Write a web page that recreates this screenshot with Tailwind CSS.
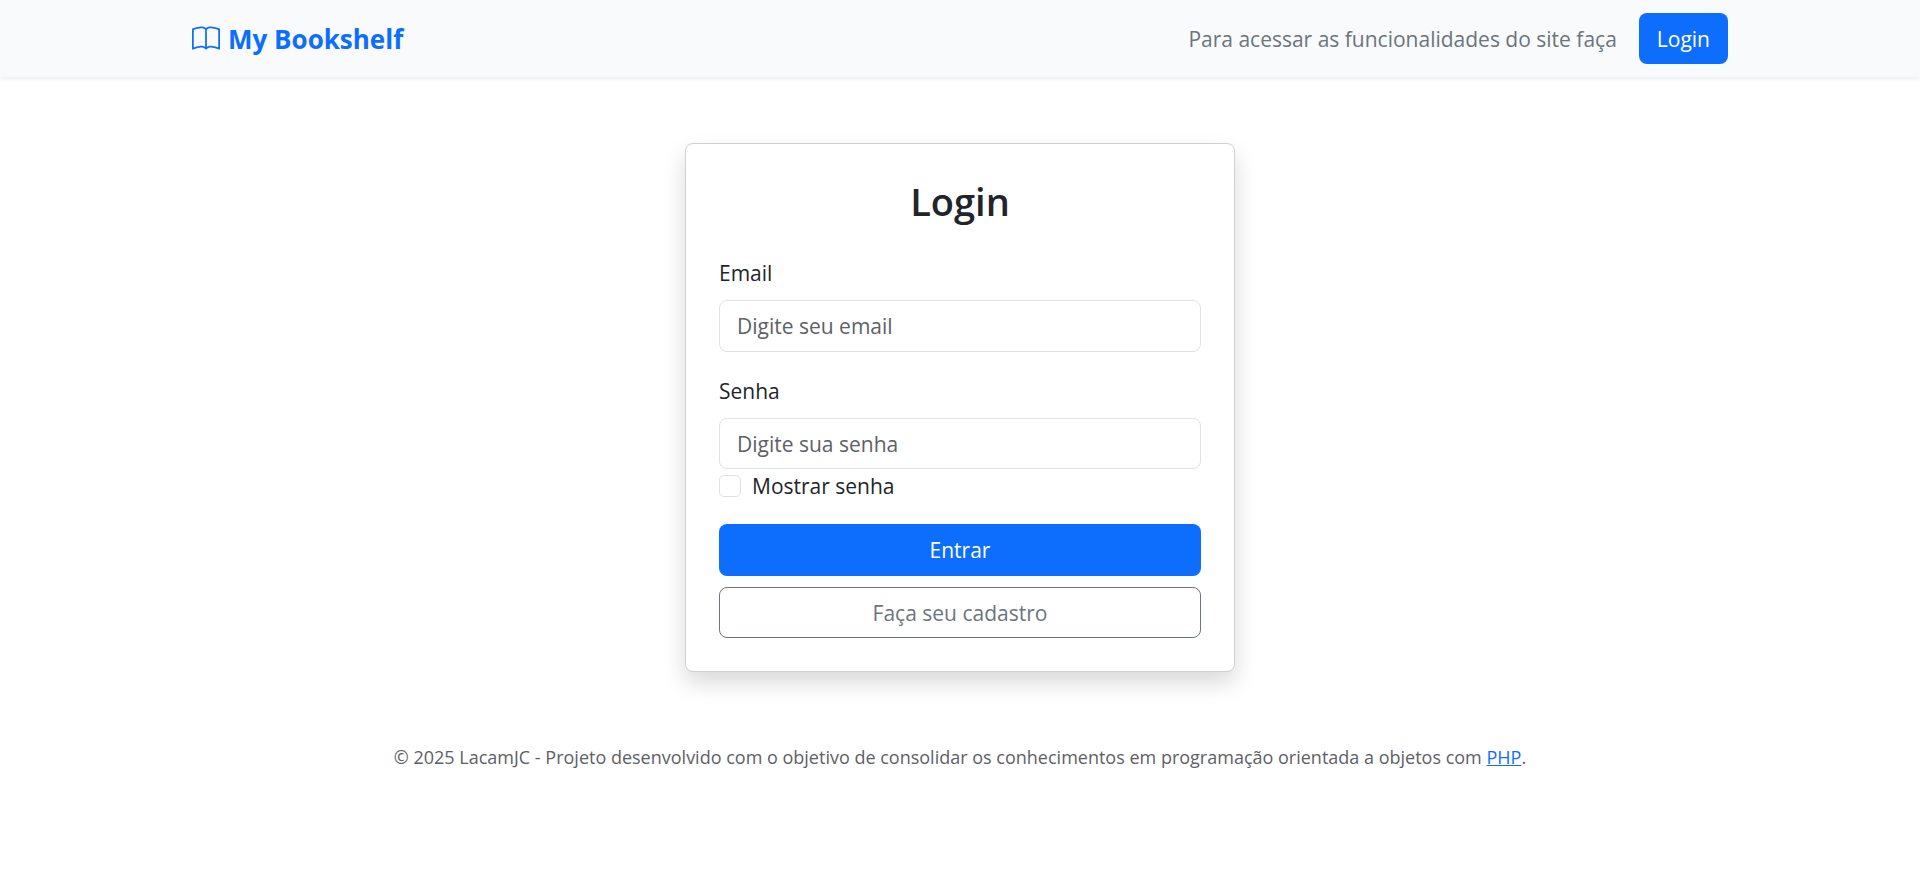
<!DOCTYPE html>
<html lang="pt-BR">
<head>
<meta charset="utf-8">
<meta name="viewport" content="width=device-width, initial-scale=1">
<title>My Bookshelf</title>
<script src="https://cdn.jsdelivr.net/npm/@tailwindcss/browser@4"></script>
</head>
<body class="bg-white font-['Open_Sans',sans-serif] text-[21px] leading-8 text-[#212529]">
<header class="bg-[#f8fafc] py-[13px] shadow-[0_2px_4px_rgba(0,0,0,0.075)]">
  <nav class="mx-auto flex w-4/5 items-center justify-between">
    <a href="#" class="flex items-center gap-2 text-[26px] font-bold text-[#0d6efd]">
      <svg class="size-7" viewBox="0 0 16 16" fill="currentColor" aria-hidden="true"><path d="M1 2.828c.885-.37 2.154-.769 3.388-.893 1.33-.134 2.458.063 3.112.752v9.746c-.935-.53-2.12-.603-3.213-.493-1.18.12-2.37.461-3.287.811zm7.5-.141c.654-.689 1.782-.886 3.112-.752 1.234.124 2.503.523 3.388.893v9.923c-.918-.35-2.107-.692-3.287-.81-1.094-.111-2.278-.039-3.213.492zM8 1.783C7.015.936 5.587.81 4.287.94c-1.514.153-3.042.672-3.994 1.105A.5.5 0 0 0 0 2.5v11a.5.5 0 0 0 .707.455c.882-.4 2.303-.881 3.68-1.02 1.409-.142 2.59.087 3.223.877a.5.5 0 0 0 .78 0c.633-.79 1.814-1.019 3.222-.877 1.378.139 2.8.62 3.681 1.02A.5.5 0 0 0 16 13.5v-11a.5.5 0 0 0-.293-.455c-.952-.433-2.48-.952-3.994-1.105C10.413.809 8.985.936 8 1.783"/></svg>
      <span>My Bookshelf</span>
    </a>
    <div class="flex items-center gap-[22px]">
      <span class="text-[#6c757d]">Para acessar as funcionalidades do site faça</span>
      <a href="#" class="flex h-[51px] items-center rounded-lg bg-[#0d6efd] px-[18px] text-white">Login</a>
    </div>
  </nav>
</header>
<main class="px-4 pt-[66px]">
  <form class="mx-auto max-w-[550px] rounded-lg border border-[#cfd0d1] bg-white p-[33px] shadow-[0_11px_22px_rgba(0,0,0,0.15)]">
    <h1 class="mb-8 text-center text-[38px] leading-[48px] font-semibold">Login</h1>
    <label for="email" class="mb-[11px] block">Email</label>
    <input id="email" type="email" placeholder="Digite seu email" class="block h-[52px] w-full rounded-lg border border-[#dee2e6] px-[17px] placeholder:text-[#5d6166]">
    <label for="senha" class="mt-[23px] mb-[11px] block">Senha</label>
    <input id="senha" type="password" placeholder="Digite sua senha" class="block h-[51px] w-full rounded-lg border border-[#dee2e6] px-[17px] placeholder:text-[#5d6166]">
    <div class="mt-[1px] mb-[22px] flex items-center gap-[11px]">
      <input id="mostrar" type="checkbox" class="size-[22px] appearance-none rounded-[5px] border border-[#dee2e6] bg-white checked:bg-[#0d6efd]">
      <label for="mostrar">Mostrar senha</label>
    </div>
    <button type="submit" class="block h-[52px] w-full rounded-lg bg-[#0d6efd] text-white">Entrar</button>
    <button type="button" class="mt-[11px] block h-[51px] w-full rounded-lg border border-[#6c757d] text-[#6c757d]">Faça seu cadastro</button>
  </form>
</main>
<footer class="px-4 pt-[69px] pb-8 text-center text-[18px] text-[#5d6166]">
  © 2025 LacamJC - Projeto desenvolvido com o objetivo de consolidar os conhecimentos em programação orientada a objetos com <a href="#" class="text-[#0d6efd] underline">PHP</a>.
</footer>
</body>
</html>
